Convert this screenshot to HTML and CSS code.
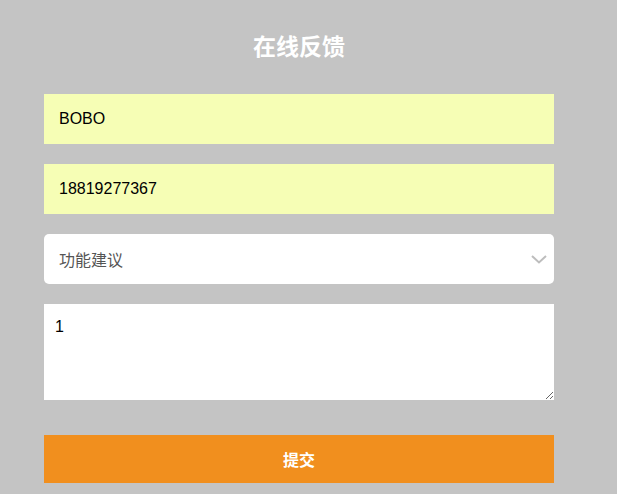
FILE: index.html
```html
<!DOCTYPE html>
<html lang="zh">
<head>
<meta charset="utf-8">
<link rel="stylesheet" href="styles.css">
</head>
<body>
<div class="page">
  <h1 class="title">在线反馈</h1>
  <form class="form">
    <input class="field filled" type="text" value="BOBO">
    <input class="field filled" type="text" value="18819277367">
    <div class="select">
      <span class="select-text">功能建议</span>
      <svg class="chev" width="16" height="9" viewBox="0 0 16 9"><path d="M1 1 L8 7.5 L15 1" fill="none" stroke="#bdbdbd" stroke-width="2"/></svg>
    </div>
    <textarea class="area">1</textarea>
    <button class="submit" type="button">提交</button>
  </form>
</div>
</body>
</html>
```
FILE: styles.css
```css
html, body {
  margin: 0;
  padding: 0;
  background: #c4c4c4;
}
body {
  font-family: "Liberation Sans", "Noto Sans CJK SC", sans-serif;
}
.page {
  width: 510px;
  margin-left: 44px;
  padding-top: 30px;
}
.title {
  margin: 0;
  height: 30px;
  line-height: 30px;
  text-align: center;
  color: #fff;
  font-size: 23px;
  font-weight: bold;
  font-family: "Noto Sans CJK SC", sans-serif;
}
.form {
  display: flex;
  flex-direction: column;
  margin-top: 34px;
}
.field {
  box-sizing: border-box;
  height: 50px;
  margin: 0 0 20px 0;
  padding: 0 15px;
  border: none;
  outline: none;
  font-size: 16px;
  font-family: "Liberation Sans", sans-serif;
  color: #000;
}
.filled {
  background: #f6feb5;
}
.select {
  box-sizing: border-box;
  height: 50px;
  margin-bottom: 20px;
  padding: 0 7px 0 15px;
  background: #fff;
  border-radius: 5px;
  display: flex;
  align-items: center;
  justify-content: space-between;
}
.select-text {
  font-size: 16px;
  color: #555;
  font-family: "Noto Sans CJK SC", sans-serif;
}
.chev {
  display: block;
}
.area {
  box-sizing: border-box;
  height: 96px;
  margin: 0 0 35px 0;
  padding: 14px 11px;
  border: none;
  outline: none;
  background: #fff;
  font-size: 16px;
  font-family: "Liberation Sans", sans-serif;
  color: #000;
  resize: vertical;
}
.submit {
  height: 48px;
  border: none;
  background: #f18f1e;
  color: #fff;
  font-size: 16px;
  font-weight: bold;
  font-family: "Noto Sans CJK SC", sans-serif;
  cursor: pointer;
}
```
